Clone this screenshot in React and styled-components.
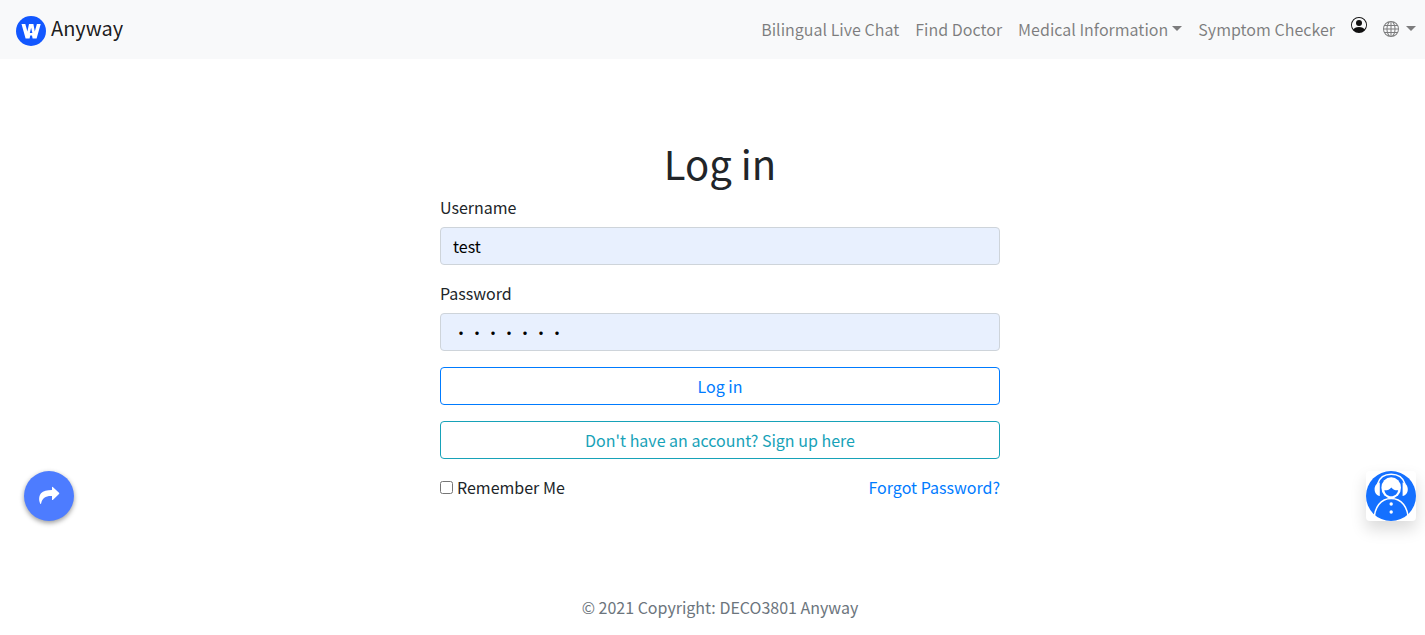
import React from "react";
import styled, { createGlobalStyle } from "styled-components";
import { BsPersonCircle, BsGlobe } from "react-icons/bs";

const GlobalStyle = createGlobalStyle`
  *, *::before, *::after { box-sizing: border-box; }
  body {
    margin: 0;
    background: #fff;
    color: #212529;
    font: 400 16px/24px "Noto Sans CJK SC", "Noto Sans", sans-serif;
  }
  button, input { font: inherit; }
`;

const Navbar = styled.header`
  display: flex;
  align-items: center;
  justify-content: space-between;
  min-height: 59px;
  padding: 8px 1px 8px 16px;
  background: #f8f9fa;
`;

const Brand = styled.a`
  display: flex;
  gap: 5px;
  color: rgba(0, 0, 0, 0.9);
  font-size: 20px;
  line-height: 30px;
  text-decoration: none;

  svg {
    margin-top: 3px;
  }
`;

const Nav = styled.nav`
  display: flex;
  align-items: center;
  margin-bottom: 2px;
`;

const NavLink = styled.a`
  padding: 8px;
  color: rgba(0, 0, 0, 0.5);
  text-decoration: none;
  white-space: nowrap;
`;

const AccountLink = styled.a`
  display: flex;
  padding: 8px 8px 16px;
  color: #111;
`;

const MenuButton = styled.button`
  display: flex;
  align-items: center;
  gap: ${(p) => (p.$wide ? "7px" : "4px")};
  padding: 8px;
  border: 0;
  background: none;
  color: rgba(0, 0, 0, 0.5);
  white-space: nowrap;
  cursor: pointer;

  &::after {
    content: "";
    border: 5px solid transparent;
    border-top-color: currentColor;
    border-bottom: 0;
  }
`;

const Page = styled.main`
  padding: 80px 0 80px 15px;
`;

const LoginForm = styled.form`
  display: flex;
  flex-direction: column;
  gap: 16px;
  width: 100%;
  max-width: 560px;
  margin: 0 auto;
`;

const Title = styled.h1`
  margin: 0 0 -8px;
  font-size: 40px;
  font-weight: 400;
  line-height: 48px;
  text-align: center;
`;

const Field = styled.div`
  display: flex;
  flex-direction: column;
  gap: 8px;
`;

const TextInput = styled.input`
  width: 100%;
  height: 38px;
  padding: 6px 12px;
  border: 1px solid #ced4da;
  border-radius: 4px;
  background: #e8f0fe;
  color: #000;
`;

const OutlineButton = styled.button`
  height: 38px;
  padding: 6px 12px;
  border: 1px solid ${(p) => p.$color};
  border-radius: 4px;
  background: transparent;
  color: ${(p) => p.$color};
  cursor: pointer;
`;

const Options = styled.div`
  display: flex;
  justify-content: space-between;
`;

const Remember = styled.label`
  display: flex;
  align-items: center;
  gap: 4px;

  input {
    width: 13px;
    height: 13px;
    margin: 0;
  }
`;

const ForgotLink = styled.a`
  color: #007bff;
  text-decoration: none;
`;

const Footer = styled.footer`
  padding: 16px 0 15px 15px;
  color: #6c757d;
  text-align: center;
`;

const FloatingButton = styled.button`
  position: fixed;
  bottom: 114px;
  width: 50px;
  height: 50px;
  padding: 0;
  border: 0;
  cursor: pointer;

  svg {
    display: block;
  }
`;

const ShareButton = styled(FloatingButton)`
  left: 24px;
  border-radius: 50%;
  background: #4d7cff;
  box-shadow: 0 2px 5px rgba(0, 0, 0, 0.4);
`;

const SupportButton = styled(FloatingButton)`
  right: 9px;
  border-radius: 4px;
  background: #fff;
  box-shadow: 0 8px 16px rgba(0, 0, 0, 0.15);
`;

const LogoMark = () => (
  <svg width="30" height="30" viewBox="0 0 30 30" aria-hidden="true">
    <circle cx="15" cy="15" r="15" fill="#1257ff" />
    <path
      d="M5.500 8h3.800l2.100 7.500L13 8h4.400l1.400 7.500L20.900 8h3.800l-4.100 14.500h-4l-.6-3h-1.800l-.6 3h-4z"
      fill="#fff"
    />
    <path d="M15.100 11.800l1.300 5.200h-2.600z" fill="#1257ff" />
  </svg>
);

const ShareIcon = () => (
  <svg width="50" height="50" viewBox="0 0 50 50" aria-hidden="true">
    <path
      d="M28 16.400q0-1 .8-.4l6.200 5.800q.7.600 0 1.200l-6.200 5.900q-.8.500-.8-.500v-3.400c-6.500-.2-9.500 1.500-10.900 7.600q-.4 1-.9 0c-1.400-3-1.600-7.300.8-10.300 2.300-2.600 6-3.300 11-3.300z"
      fill="#fff"
    />
  </svg>
);

const SupportIcon = () => (
  <svg width="50" height="50" viewBox="0 0 50 50" aria-hidden="true">
    <circle cx="25" cy="25" r="25" fill="#1470ff" />
    <g fill="none" stroke="#fff" strokeWidth="1.500">
      <path d="M11.500 13C13.500 6.500 19 3.300 25.200 3.300S37 6.500 39 13" />
      <path d="M8 50C8 36 15 27.400 25.200 27.400S42.400 36 42.400 50" />
    </g>
    <path
      d="M13.800 11.500v13.500c-3.300-.5-5.200-3.300-5.200-6.700s2-6.200 5.200-6.800zM36.600 11.500v13.500c3.300-.5 5.200-3.300 5.200-6.700s-2-6.200-5.200-6.800z"
      fill="#fff"
    />
    <ellipse cx="25.200" cy="16.800" rx="9.800" ry="10.600" fill="#fff" />
    <path
      d="M18.300 19.300c3 .2 5.300-.7 7-2.800 1.700 2.100 4 3 6.900 2.800-.8 3.800-3.400 6-7 6s-6.100-2.200-6.900-6z"
      fill="#1470ff"
    />
    <circle cx="25.200" cy="33" r="1.700" fill="#fff" />
    <circle cx="25.200" cy="41" r="1.700" fill="#fff" />
  </svg>
);

export default function App() {
  return (
    <>
      <GlobalStyle />
      <Navbar>
        <Brand href="#">
          <LogoMark />
          Anyway
        </Brand>
        <Nav aria-label="Main">
          <NavLink href="#chat">Bilingual Live Chat</NavLink>
          <NavLink href="#doctor">Find Doctor</NavLink>
          <MenuButton type="button">Medical Information</MenuButton>
          <NavLink href="#symptoms">Symptom Checker</NavLink>
          <AccountLink href="#account" aria-label="Account">
            <BsPersonCircle size={16} />
          </AccountLink>
          <MenuButton type="button" $wide aria-label="Language">
            <BsGlobe size={16} />
          </MenuButton>
        </Nav>
      </Navbar>
      <Page>
        <LoginForm onSubmit={(e) => e.preventDefault()}>
          <Title>Log in</Title>
          <Field>
            <label htmlFor="username">Username</label>
            <TextInput id="username" type="text" defaultValue="test" />
          </Field>
          <Field>
            <label htmlFor="password">Password</label>
            <TextInput id="password" type="password" defaultValue="testing" />
          </Field>
          <OutlineButton type="submit" $color="#007bff">Log in</OutlineButton>
          <OutlineButton type="button" $color="#17a2b8">
            Don't have an account? Sign up here
          </OutlineButton>
          <Options>
            <Remember>
              <input type="checkbox" />
              Remember Me
            </Remember>
            <ForgotLink href="#forgot">Forgot Password?</ForgotLink>
          </Options>
        </LoginForm>
      </Page>
      <Footer>© 2021 Copyright: DECO3801 Anyway</Footer>
      <ShareButton type="button" aria-label="Share">
        <ShareIcon />
      </ShareButton>
      <SupportButton type="button" aria-label="Live support">
        <SupportIcon />
      </SupportButton>
    </>
  );
}
